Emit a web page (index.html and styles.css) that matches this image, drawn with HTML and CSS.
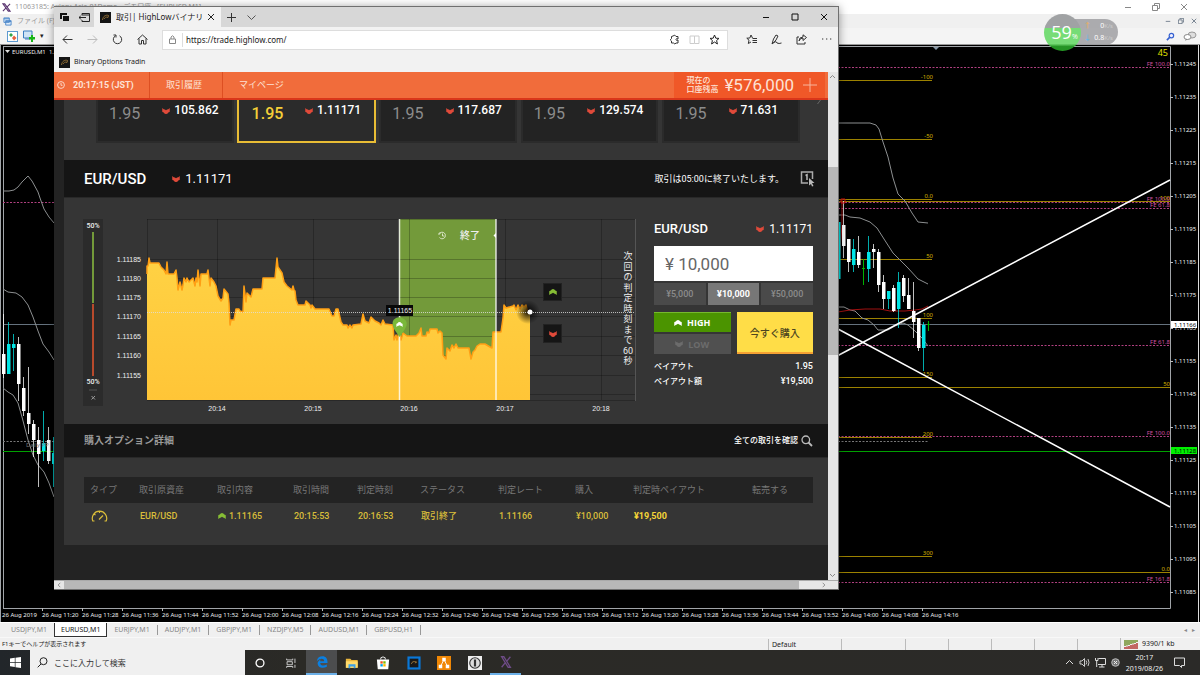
FILE: index.html
```html
<!DOCTYPE html>
<html lang="ja">
<head>
<meta charset="utf-8">
<title>Desktop</title>
<link rel="stylesheet" href="styles.css">
</head>
<body>
<svg class="defs" aria-hidden="true">
  <symbol id="down" viewBox="0 0 10 8"><path d="M0 0Q2 2 3.5 2L5 3 6.500 2Q8 2 10 0V5Q9 6 8 6 7 8 5 8 3 8 2 6 1 6 0 5Z"/></symbol>
  <symbol id="up" viewBox="0 0 10 8"><path d="M0 8Q2 6 3.500 6L5 5 6.500 6Q8 6 10 8V3Q9 2 8 2 7 0 5 0 3 0 2 2 1 2 0 3Z"/></symbol>
  <symbol id="fav" viewBox="0 0 11 11"><rect width="11" height="11" fill="#151515"/><path d="M2.500 8C3 4 6 2.500 8.500 3.500L8 5.500C6 4.500 5 5.500 4 7" fill="none" stroke="#8f6c34"/></symbol>
  <symbol id="restore" viewBox="0 0 8 8"><path d="M.5 2.500H5.500V7.500H.5ZM2.500 2V.5H7.500V5.500H6" fill="none" stroke="currentColor"/></symbol>
  <symbol id="close" viewBox="0 0 8 8"><path d="M1 1L7 7M7 1L1 7" fill="none" stroke="currentColor"/></symbol>
  <symbol id="min" viewBox="0 0 8 8"><path d="M1 4.500H7" fill="none" stroke="currentColor"/></symbol>
</svg>

<main class="terminal">
  <header class="title-row">
    <svg class="i9" viewBox="0 0 10 10"><path d="M1 1H3L9 9H7ZM9 1L6 4M4 6L1 9" fill="none" stroke="#5a3470" stroke-width="1.200"/></svg>
    <span>11063185: Axiory-Asia-01Demo - デモ口座 - [EURUSD,M1]</span>
    <span class="win-buttons"><button aria-label="最小化"><svg class="i8"><use href="#min"/></svg></button><button aria-label="元に戻す"><svg class="i8"><use href="#restore"/></svg></button><button aria-label="閉じる"><svg class="i8"><use href="#close"/></svg></button></span>
  </header>
  <div class="menu-row">
    <svg class="i9" viewBox="0 0 10 10"><path d="M1 1H7V6H1ZM3 4H9V9H3Z" fill="#dcebfa" stroke="#4a86c8"/><path d="M1 2H7M3 5H9" stroke="#4a86c8"/></svg>
    <span>ファイル (F)</span>
    <span class="mdi-buttons"><button aria-label="最小化"><svg class="i6"><use href="#min"/></svg></button><button aria-label="元に戻す"><svg class="i6"><use href="#restore"/></svg></button><button aria-label="閉じる"><svg class="i6"><use href="#close"/></svg></button></span>
  </div>
  <div class="tool-row">
    <button class="tool" aria-label="気配値"><svg class="i11" viewBox="0 0 11 11"><rect x=".5" y=".5" width="10" height="10" fill="#fff" stroke="#5d9ad0"/><path d="M2 4L4 2 6 4 4 6Z" fill="#35a64a"/><path d="M5 7L7 4.500 9.500 7 7 9.500Z" fill="#e8603c"/></svg></button>
    <button class="tool" aria-label="新規チャート"><svg class="i12" viewBox="0 0 12 12"><path d="M.5 1H9V8H.5ZM2 9H7" fill="#cfe3f5" stroke="#3b7cc0"/><path d="M6 7H8V5H10V7H12V9.500H10V12H8V9.500H6Z" fill="#18b518"/></svg></button>
    <span class="caret">▾</span>
    <span class="tool-right">
      <svg class="i9" viewBox="0 0 10 10"><circle cx="6" cy="4" r="2.500" fill="#eef" stroke="#3561d0" stroke-width="1.300"/><path d="M4 6L1 9" stroke="#3561d0" stroke-width="1.800"/></svg>
      <svg class="i14" viewBox="0 0 14 10"><ellipse cx="9" cy="4" rx="4" ry="3" fill="#ddd" stroke="#999"/><ellipse cx="4.500" cy="6" rx="3.500" ry="2.500" fill="#fff" stroke="#888"/><path d="M3 8L2 10 5 8" fill="#888"/></svg>
    </span>
  </div>
  <svg class="market" viewBox="0 45 1200 577" preserveAspectRatio="xMinYMin meet" id="market"></svg>
  <nav class="chart-tabs">
    <button>USDJPY,M1</button><button class="active">EURUSD,M1</button><button>EURJPY,M1</button><button>AUDJPY,M1</button><button>GBPJPY,M1</button><button>NZDJPY,M5</button><button>AUDUSD,M1</button><button>GBPUSD,H1</button>
    <span class="tab-arrows">◂ &nbsp; ▸</span>
  </nav>
  <footer class="status">
    <span class="help">F1キーでヘルプが表示されます</span><span class="cell profile">Default</span><span class="cell wide"></span><span class="cell"></span><span class="cell"></span><span class="cell"></span><span class="cell"></span><span class="cell"></span>
    <span class="traffic"><svg class="bars" viewBox="0 0 15 9"><path d="M1 0V6M3 0V5.500M5 0V5M7 0V4M9 0V3.500M11 0V3M13 0V2" stroke="#6f8f2c" stroke-width="1.500"/><path d="M1 9V7M3 9V6.500M5 9V6M7 9V5M9 9V4.500M11 9V4M13 9V3" stroke="#b33a34" stroke-width="1.500"/></svg>9390/1 kb</span>
  </footer>
</main>

<div class="meter"><div class="rates"><span><i class="o">↑</i>0<small>K/s</small></span><span><i class="b">↓</i>0.8<small>K/s</small></span></div><div class="dial">59<small>%</small></div></div>

<section class="browser">
  <div class="strip">
    <button class="strip-btn" aria-label="タブ一覧"><svg class="i11" viewBox="0 0 11 11"><path d="M1 1H8V3H3V7H1ZM4 4H10V9H4Z" fill="#111"/></svg></button>
    <button class="strip-btn" aria-label="タブを保存"><svg class="i11" viewBox="0 0 11 11"><path d="M3 3V1.500H10.500V9.500H3V8M3 3H10M0 5.500H7M2 3.500L0 5.500 2 7.500" fill="none" stroke="#222"/></svg></button>
    <div class="tab"><svg class="i11"><use href="#fav"/></svg><span class="tab-title">取引| HighLowバイナリーオプション</span><button aria-label="タブを閉じる"><svg class="i8"><use href="#close"/></svg></button></div>
    <button class="strip-btn" aria-label="新しいタブ"><svg class="i9" viewBox="0 0 9 9"><path d="M4.500 0V9M0 4.500H9" stroke="#333"/></svg></button>
    <button class="strip-btn" aria-label="タブ プレビュー"><svg class="i9" viewBox="0 0 9 9"><path d="M.5 2.500L4.500 6.500 8.500 2.500" fill="none" stroke="#555"/></svg></button>
    <span class="edge-buttons"><button aria-label="最小化"><svg class="i8"><use href="#min"/></svg></button><button aria-label="最大化"><svg class="i8" viewBox="0 0 8 8"><path d="M1 1H7V7H1Z" fill="none" stroke="#111"/></svg></button><button aria-label="閉じる"><svg class="i8"><use href="#close"/></svg></button></span>
  </div>
  <div class="address">
    <button aria-label="戻る"><svg class="i11" viewBox="0 0 11 11"><path d="M1 5.500H10.500M5 1.500L1 5.500 5 9.500" fill="none" stroke="#333"/></svg></button>
    <button aria-label="進む"><svg class="i11" viewBox="0 0 11 11"><path d="M.5 5.500H10M6 1.500L10 5.500 6 9.500" fill="none" stroke="#bbb"/></svg></button>
    <button aria-label="更新"><svg class="i11" viewBox="0 0 11 11"><path d="M7.500 1.800A4.200 4.200 0 1 1 3.500 1.800M1.500 1H4V3.500" fill="none" stroke="#333"/></svg></button>
    <button aria-label="ホーム"><svg class="i11" viewBox="0 0 11 11"><path d="M.5 5.500L5.500 1 10.500 5.500M2 4.500V10H4.500V6.500H6.500V10H9V4.500" fill="none" stroke="#333"/></svg></button>
    <label class="urlbox">
      <svg class="i9" viewBox="0 0 9 9"><path d="M1.500 4H7.500V8.500H1.500ZM3 4V2Q4.500 -.5 6 2V4" fill="none" stroke="#888"/></svg>
      <input type="text" aria-label="アドレス" value="https://trade.highlow.com/">
      <svg class="i11" viewBox="0 0 11 11"><path d="M4 2Q6 0 7 2.500H9V5Q7 4 7 5.500 7 7 9 6V9H7Q6 11 4.500 9H2.500V7Q0 6 2.500 4.500V2.500Z" fill="none" stroke="#333"/></svg>
      <svg class="i11" viewBox="0 0 11 11"><path d="M1 2H5.500V9.500H1ZM5.500 2H10V9.500H5.500" fill="none" stroke="#ccc"/></svg>
      <svg class="i11" viewBox="0 0 11 11"><path d="M5.500 1L6.800 4.200 10 4.400 7.600 6.500 8.400 10 5.500 8 2.600 10 3.400 6.500 1 4.400 4.200 4.200Z" fill="none" stroke="#222"/></svg>
    </label>
    <button aria-label="お気に入り"><svg class="i11" viewBox="0 0 11 11"><path d="M6.500 4L5 1 3.800 4 .8 4.200 3 6.200 2.300 9.500 5 8M6.500 4.500H11M6.500 6.500H11M6.500 8.500H11" fill="none" stroke="#333"/></svg></button>
    <button aria-label="ノート"><svg class="i11" viewBox="0 0 11 11"><path d="M1 10L2.500 5 5 1 7 2 5 6 2 9.500M1 10Q5 6 6 9 8 10 10.500 9" fill="none" stroke="#333"/></svg></button>
    <button aria-label="共有"><svg class="i11" viewBox="0 0 11 11"><path d="M3 3H1V10H9V8M3 7Q4 4 7 4V6.500L10.500 3.500 7 .8V3Q3 3 3 7Z" fill="none" stroke="#333"/></svg></button>
    <button aria-label="設定"><svg class="i11" viewBox="0 0 11 11"><path d="M1 5H2.300M5 5H6.300M9 5H10.300" stroke="#333"/></svg></button>
  </div>
  <div class="bookmarks"><a href="#"><svg class="i11"><use href="#fav"/></svg><span>Binary Options Tradin</span></a></div>

  <div class="viewport">
    <div class="page">
      <header class="site-bar">
        <span class="clock"><svg class="i8" viewBox="0 0 8 8"><circle cx="4" cy="4" r="3.400" fill="none" stroke="#fbd5c6"/><path d="M4 2V4.300H5.500" fill="none" stroke="#fbd5c6"/></svg><b>20:17:15 (JST)</b></span>
        <a class="l1" href="#">取引履歴</a><a class="l2" href="#">マイページ</a>
        <div class="balance"><span>現在の<br>口座残高</span><strong>¥576,000</strong><svg class="i14" viewBox="0 0 14 14"><path d="M7 0V14M0 7H14" stroke="#f9b59b"/></svg></div>
      </header>
      <div class="cards">
        <article><p>17:21</p><div><span>1.95</span><b><svg class="arr"><use href="#down"/></svg>105.862</b></div></article>
        <article class="on"><p>17:21</p><div><span>1.95</span><b><svg class="arr"><use href="#down"/></svg>1.11171</b></div></article>
        <article><p>17:21</p><div><span>1.95</span><b><svg class="arr"><use href="#down"/></svg>117.687</b></div></article>
        <article><p>17:21</p><div><span>1.95</span><b><svg class="arr"><use href="#down"/></svg>129.574</b></div></article>
        <article class="last"><p>17:21</p><div><span>1.95</span><b><svg class="arr"><use href="#down"/></svg>71.631</b></div></article>
        <svg class="more" viewBox="0 0 6 6"><path d="M4.500 0L1.500 4" stroke="#666"/></svg>
      </div>
      <div class="pair-bar"><h1>EUR/USD</h1><span class="rate"><svg class="arr"><use href="#down"/></svg>1.11171</span><span class="ends">取引は05:00に終了いたします。</span>
        <button aria-label="ワンクリック"><svg class="one" viewBox="0 0 15 17"><path d="M8 13H1.500V2H12.500V9" fill="none" stroke="#aaa" stroke-width="1.500"/><path d="M5.500 5.500L7 4.800V10" fill="none" stroke="#bbb" stroke-width="1.500"/><path d="M9 8L14.500 13H12L13.500 16 12 16.500 11 14 9 15.500Z" fill="#bbb"/></svg></button></div>
      <div class="trade">
        <svg class="plot" viewBox="64 198 580 226" id="plot">
          <defs><linearGradient id="gold" x1="0" y1="0" x2="0" y2="1"><stop offset="0" stop-color="#ffd244"/><stop offset="1" stop-color="#ffc537"/></linearGradient>
          <radialGradient id="shade"><stop offset="0" stop-color="#000" stop-opacity=".9"/><stop offset="1" stop-color="#000" stop-opacity="0"/></radialGradient></defs>
          <rect x="83" y="219" width="20" height="187" fill="#2b2b2b"/>
          <path d="M93 232V303" stroke="#739a3a" stroke-width="2"/><path d="M93 304V376" stroke="#b84a2c" stroke-width="2"/><path d="M89 390H97" stroke="#555"/>
          <g class="pct"><text x="93" y="228">50%</text><text x="93" y="384">50%</text></g><path d="M91.500 396L95 399.500M95 396L91.500 399.500" stroke="#999"/>
          <rect x="399" y="219" width="97" height="181" fill="#739a3a"/>
          <path d="M147 219.500H635M147 259.500H635M147 278.500H635M147 297.500H635M147 316.500H635M147 336.500H635M147 355.500H635M147 375.500H635M147 394.500H635M147 400.500H635M147.500 219V400M217.500 219V400M313.500 219V400M409.500 219V400M505.500 219V400M601.500 219V400" stroke="#000" stroke-opacity=".24" fill="none"/>
          <path d="M635.500 219V401" stroke="#555"/>
          <path fill="url(#gold)" d="M147 400V274L147 266L148 266L149 258 150 263 159 263 161 267 164 270 166 274 167 262 168 274 174 274 176 270 177 278 178 290 180 282 182 290 183 285 184 278 186 282 187 278 189 282 193 278 195 286 196 278 197 282 198 270 200 286 201 274 207 274 208 270 210 286 211 278 214 282 216 286 218 296 221 301 223 298 224 289 228 294 229 303 230 325 231 320 234 320 236 309 239 309 240 311 243 312 244 286 246 302 247 293 251 297 253 289 262 289 263 278 275 278 277 258 278 267 282 273 284 282 287 286 292 290 293 286 294 290 295 291 296 300 298 305 305 305 306 301 310 305 311 308 312 305 315 309 329 309 332 316 334 316 336 309 338 309 341 322 343 325 347 325 348 328 350 325 352 328 353 325 361 324 363 314 365 321 369 323 371 317 375 321 379 323 381 325 383 320 385 324 393 325 394 340 396 335 397 340 399 332 401 340 403 333 407 336 416 336 419 333 421 328 422 336 426 336 427 332 429 333 430 329 437 329 438 333 440 331 442 333 443 355 446 359 447 348 450 351 452 345 454 348 456 344 458 348 469 348 471 359 473 352 475 350 477 346 480 344 485 344 490 347 492 348 493 332 501 332 503 318 504 305 506 308 513 306 514 305 516 310 518 305 520 309 522 305 524 307 526 305 527 310 530 312 530 400Z"/>
          <path fill="none" stroke="#ff9f14" stroke-width="1.500" stroke-linejoin="round" d="M147 274L147 266L148 266L149 258 150 263 159 263 161 267 164 270 166 274 167 262 168 274 174 274 176 270 177 278 178 290 180 282 182 290 183 285 184 278 186 282 187 278 189 282 193 278 195 286 196 278 197 282 198 270 200 286 201 274 207 274 208 270 210 286 211 278 214 282 216 286 218 296 221 301 223 298 224 289 228 294 229 303 230 325 231 320 234 320 236 309 239 309 240 311 243 312 244 286 246 302 247 293 251 297 253 289 262 289 263 278 275 278 277 258 278 267 282 273 284 282 287 286 292 290 293 286 294 290 295 291 296 300 298 305 305 305 306 301 310 305 311 308 312 305 315 309 329 309 332 316 334 316 336 309 338 309 341 322 343 325 347 325 348 328 350 325 352 328 353 325 361 324 363 314 365 321 369 323 371 317 375 321 379 323 381 325 383 320 385 324 393 325 394 340 396 335 397 340 399 332 401 340 403 333 407 336 416 336 419 333 421 328 422 336 426 336 427 332 429 333 430 329 437 329 438 333 440 331 442 333 443 355 446 359 447 348 450 351 452 345 454 348 456 344 458 348 469 348 471 359 473 352 475 350 477 346 480 344 485 344 490 347 492 348 493 332 501 332 503 318 504 305 506 308 513 306 514 305 516 310 518 305 520 309 522 305 524 307 526 305 527 310 530 312"/>
          <path d="M399.500 219V400M496 219V400" stroke="#fff" stroke-opacity=".8" stroke-width="1.500"/>
          <circle cx="528" cy="312" r="12" fill="url(#shade)"/>
          <path d="M147 312.500H635" stroke="#ddd" stroke-opacity=".8" stroke-dasharray="1 1"/><circle cx="530" cy="312" r="2.500" fill="#fff"/>
          <rect x="386" y="305" width="27" height="11" fill="#080808"/>
          <path d="M399.500 337L394 329Q390 321 396 318 400 316 404 319 409 322 405 329Z" fill="#7ab83a"/><use href="#up" x="396" y="322" width="7" height="5" fill="#fff"/>
          <path d="M496 233L493.500 235.500 496 238Z" fill="#fff"/>
          <path d="M439.500 233.500A3.300 3.300 0 1 1 439.500 237.500M438 234H440V232M442.500 233.500V236H444.500" fill="none" stroke="#d8e4c4"/>
          <text class="ended" x="460" y="239">終了</text><text class="mark" x="400" y="313">1.11165</text>
          <g stroke="#222"><rect x="543.500" y="283.500" width="18" height="17" fill="#151515"/><rect x="543.500" y="324.500" width="18" height="18" fill="#151515"/></g>
          <use href="#up" x="549" y="289" width="8" height="6" fill="#86bd35"/><use href="#down" x="549" y="331" width="8" height="6" fill="#e04a3a"/>
          <g class="ylab"><text x="141" y="262">1.11185</text><text x="141" y="281">1.11180</text><text x="141" y="300">1.11175</text><text x="141" y="319">1.11170</text><text x="141" y="339">1.11165</text><text x="141" y="358">1.11160</text><text x="141" y="378">1.11155</text></g>
          <g class="xlab"><text x="217" y="411">20:14</text><text x="313" y="411">20:15</text><text x="409" y="411">20:16</text><text x="505" y="411">20:17</text><text x="601" y="411">20:18</text></g>
          <g class="vert"><text x="628" y="259">次</text><text x="628" y="270">回</text><text x="628" y="280">の</text><text x="628" y="291">判</text><text x="628" y="301">定</text><text x="628" y="312">時</text><text x="628" y="322">刻</text><text x="628" y="333">ま</text><text x="628" y="343">で</text><text x="628" y="354">60</text><text x="628" y="364">秒</text></g>
        </svg>
        <form class="order">
          <div class="order-head"><h2>EUR/USD</h2><span class="rate"><svg class="arr"><use href="#down"/></svg>1.11171</span></div>
          <input class="amount" aria-label="金額" value="¥ 10,000">
          <div class="amounts"><button type="button">¥5,000</button><button type="button" class="sel">¥10,000</button><button type="button">¥50,000</button></div>
          <div class="actions"><button type="button" class="high"><svg class="arr"><use href="#up"/></svg>HIGH</button><button type="button" class="buy">今すぐ購入</button><button type="button" class="low"><svg class="arr"><use href="#down"/></svg>LOW</button></div>
          <dl><dt>ペイアウト</dt><dd>1.95</dd><dt>ペイアウト額</dt><dd>¥19,500</dd></dl>
        </form>
      </div>
      <div class="detail-bar"><h2>購入オプション詳細</h2><a href="#">全ての取引を確認<svg class="lens" viewBox="0 0 12 12"><circle cx="4.800" cy="4.800" r="3.800" fill="none" stroke="#bbb" stroke-width="1.300"/><path d="M7.500 7.500L11 11" stroke="#bbb" stroke-width="1.800"/></svg></a></div>
      <div class="history">
        <table>
          <colgroup><col class="c1"><col class="c2"><col class="c3"><col class="c4"><col class="c5"><col class="c6"><col class="c7"><col class="c8"><col class="c9"><col class="c10"></colgroup>
          <thead><tr><th>タイプ</th><th>取引原資産</th><th>取引内容</th><th>取引時間</th><th>判定時刻</th><th>ステータス</th><th>判定レート</th><th>購入</th><th>判定時ペイアウト</th><th>転売する</th></tr></thead>
          <tbody><tr><td><svg class="gauge" viewBox="0 0 17 12"><path d="M3.500 11H1.800A7.200 7.200 0 1 1 15.200 11H13.500M8.500 1V3M3 4L4.500 5M8 9.500L12 5.500" fill="none" stroke="#d9bd3a" stroke-width="1.200"/></svg></td><td>EUR/USD</td><td><svg class="arr up"><use href="#up"/></svg>1.11165</td><td>20:15:53</td><td>20:16:53</td><td>取引終了</td><td>1.11166</td><td>¥10,000</td><td><strong>¥19,500</strong></td><td></td></tr></tbody>
        </table>
      </div>
    </div>
    <div class="vscroll"><svg viewBox="0 0 9 9"><path d="M2 6L4.500 3.500 7 6" fill="none" stroke="#888"/></svg><span class="thumb"></span><svg viewBox="0 0 9 9"><path d="M2 3L4.500 5.500 7 3" fill="none" stroke="#888"/></svg></div>
  </div>
  <div class="hscroll"><svg viewBox="0 0 9 9"><path d="M6 2L3.500 4.500 6 7" fill="none" stroke="#888"/></svg><span class="thumb"></span><svg class="last-arrow" viewBox="0 0 9 9"><path d="M3 2L5.500 4.500 3 7" fill="none" stroke="#888"/></svg></div>
</section>

<footer class="taskbar">
  <button class="start" aria-label="スタート"><svg class="i11" viewBox="0 0 11 11"><path d="M0 1.500L4.800 .8V5H0ZM5.500 .7L11 0V5H5.500ZM0 5.800H4.800V10L0 9.300ZM5.500 5.800H11V11L5.500 10.200Z" fill="#fff"/></svg></button>
  <label class="search"><svg class="i11" viewBox="0 0 11 11"><circle cx="6.500" cy="4.200" r="3.500" fill="none" stroke="#222"/><path d="M4 7L.7 10.300" stroke="#222"/></svg><input type="text" aria-label="検索" placeholder="ここに入力して検索"></label>
  <div class="apps">
    <button aria-label="Cortana"><svg viewBox="0 0 16 16"><circle cx="8" cy="8" r="4.500" fill="none" stroke="#fff" stroke-width="1.500"/></svg></button>
    <button aria-label="タスク ビュー"><svg viewBox="0 0 16 16"><path d="M3 3V4.500H10V3M3.500 6.500H9.500V10H3.500ZM3 13.500V12H10V13.500M12.500 3V8M12.500 10V13.500" fill="none" stroke="#ddd"/></svg></button>
    <button class="current" aria-label="Edge"><svg viewBox="0 0 16 16"><path d="M2 7C3 3 5 1.500 8.500 1.500 12.500 1.500 14.500 4.500 14.300 9H6C6 12.500 10.500 12.500 13.500 10.800V13.500C9 16 3 14.500 3 9.500 3 7.500 4.500 6 6.500 5 5.900 5.800 5.900 6.500 5.800 7H10.500C10.500 3 5 3.500 2 7Z" fill="#0b7fe0"/></svg></button>
    <button aria-label="エクスプローラー"><svg viewBox="0 0 16 16"><path d="M1 3H6L7.500 4.500H14.500V13.500H1Z" fill="#e9b63c"/><path d="M1 6H14.500V13.500H1Z" fill="#ffda6b"/><path d="M4 14V9.500H12V14H10V12H6V14Z" fill="#3c9fe5"/></svg></button>
    <button aria-label="ストア"><svg viewBox="0 0 16 16"><path d="M5.500 4V2Q8 0 10.500 2V4" fill="none" stroke="#fff"/><path d="M1 4H15L14 15H2Z" fill="#fff"/><path d="M5 6H7.700V8.700H5Z" fill="#f05022"/><path d="M8.300 6H11V8.700H8.300Z" fill="#7eb900"/><path d="M5 9.300H7.700V12H5Z" fill="#00a3ee"/><path d="M8.300 9.300H11V12H8.300Z" fill="#ffb800"/></svg></button>
    <button aria-label="HighLow"><svg viewBox="0 0 16 16"><rect x=".5" y=".5" width="15" height="15" fill="#0a78d8"/><rect x="3" y="3" width="10" height="10" fill="#191919"/><path d="M5 9Q6 5 11 7L9 8" fill="none" stroke="#a9803c"/></svg></button>
    <button aria-label="draw.io"><svg viewBox="0 0 16 16"><rect width="16" height="16" fill="#f08705"/><path d="M8 4L4 12M8 4L12 12" stroke="#fff"/><path d="M6 2H10V6H6ZM2 10H6V14H2ZM10 10H14V14H10Z" fill="#fff"/></svg></button>
    <button aria-label="1Password"><svg viewBox="0 0 16 16"><rect width="16" height="16" fill="#eee"/><circle cx="8" cy="8" r="6" fill="#ddd" stroke="#333" stroke-width="1.300"/><path d="M8 4V12" stroke="#333" stroke-width="2.500"/></svg></button>
    <button class="running" aria-label="MetaTrader"><svg viewBox="0 0 16 16"><path d="M3 2H5.500L13 14H10.500ZM13 2L9 7M7 9L3 14" fill="none" stroke="#6f4c88" stroke-width="1.500"/></svg></button>
  </div>
  <div class="tray">
    <svg class="i9" viewBox="0 0 9 9"><path d="M1 6L4.500 2.500 8 6" fill="none" stroke="#ddd"/></svg>
    <svg class="i11" viewBox="0 0 11 11"><path d="M1 4H3L5.500 1.500V9.500L3 7H1ZM7 3.500Q8.500 5.500 7 7.500M9 2Q11 5.500 9 9" fill="none" stroke="#ccc"/></svg>
    <svg class="i11" viewBox="0 0 11 11"><path d="M3.500 1.500H10.500V7.500H3M7 8V10M4 10H9.500M.5 1V3.500H3V1M1.700 3.500V10" fill="none" stroke="#ddd"/></svg>
    <svg class="i9" viewBox="0 0 9 9"><circle cx="4.500" cy="4.500" r="3.800" fill="#777" stroke="#bbb"/><path d="M3 3L6 6M6 3L3 6" stroke="#eee"/></svg>
    <time>20:17<br>2019/08/26</time>
    <svg class="i11" viewBox="0 0 11 11"><path d="M.5 1H10.500V8.500H7.500V10.500L5.500 8.500H.5Z" fill="none" stroke="#ddd"/></svg>
  </div>
</footer>
<script src="market.js"></script>
</body>
</html>
```

FILE: market.js
```js
const parts = [];
const path = (d, stroke, extra = '') => parts.push(`<path d="${d}" fill="none" stroke="${stroke}" ${extra}/>`);
const text = (x, y, s, cls) => parts.push(`<text x="${x}" y="${y}" class="${cls}">${s}</text>`);

parts.push('<rect x="0" y="45" width="1200" height="577" fill="#000"/>');
path('M.5 45V622M3.500 46V608M3 46.500H1170.500V608.500H3', '#a0a4a8');
path('M1198.500 45V622', '#ddd');

const gold = '#9c8200';
[[80, '-100'], [139, '-50'], [199, '0.0'], [259, '50'], [318, '100'], [377, '150'], [437, '200'], [556, '300']].forEach(([y, s]) => {
  path(`M838 ${y}.5H932`, gold);
  text(933, y - 1, s, 'm gold end');
});
[[201, '100'], [387, '50'], [572, '0.0']].forEach(([y, s]) => {
  path(`M838 ${y}.5H1170`, gold);
  text(1170, y - 1, s, 'm gold end');
});
[[67, 'FE 100.0'], [202, 'FE 100.0'], [208, 'FE 61.8'], [345, 'FE 61.8'], [436, 'FE 100.0'], [582, 'FE 161.8']].forEach(([y, s]) => {
  path(`M838 ${y}.5H1170`, '#b04080', 'stroke-dasharray="2 1.500"');
  text(1170, y - 1, s, 'm pink end');
});
path('M3 202.500H54', '#b04080', 'stroke-dasharray="2 1.500"');
path('M838 441.500H928M3 441.500H54', '#777', 'stroke-dasharray="2 1.500"');
path('M838 324.500H1170M3 324.500H54', '#65727e');
path('M838 451.500H1170M3 451.500H54', '#00a000');

const curve = '#8c8f90';
path('M3 191L9 191 14 190 18 187 22 182 28 176 32 181 38 192 40 198 44 209 49 217 54 223', curve);
path('M3 289L8 292 16 293 22 297 28 305 33 317 38 331 43 344 49 352 54 360', curve);
path('M3 388L8 392 13 395 18 403 22 417 28 440 33 455 38 465 44 472 49 483 54 497', curve);
path('M838 123L850 123 870 123 876 125 879 129 883 142 888 157 893 178 898 194 905 201 912 213 918 222 928 223', curve);
path('M838 215L845 215 850 217 860 218 870 222 877 228 884 239 893 253 900 260 908 268 918 279 928 284', curve);
path('M838 307L844 307 850 310 855 311 862 318 868 320 874 325 878 330 888 330 895 326 903 323 908 325 915 331 922 338 928 346', curve);
path('M838 312L850 310 865 309 880 309 890 311 905 311 915 310 922 309 928 306M842 199V225L839 262', '#a01010');

// x, wick top, wick bottom, body top, body bottom, colour
const W = '#fff', C = '#00e5e5', G = '#00b000';
[
  [3, 314, 378, 354, 374, W], [8, 322, 374, 344, 374, C], [13, 334, 371, 344, 348, C], [18, 337, 401, 344, 384, W],
  [23, 377, 416, 388, 411, W], [28, 367, 434, 413, 424, W], [33, 420, 457, 424, 440, W], [38, 427, 487, 440, 454, W],
  [43, 411, 461, 443, 451, C], [48, 427, 464, 440, 461, W], [53, 437, 487, 453, 464, C],
  [838, 222, 282, 222, 279, C], [843, 201, 258, 225, 246, W], [848, 239, 272, 239, 262, W], [853, 239, 272, 249, 265, C],
  [858, 236, 268, 252, 265, W], [868, 236, 282, 252, 269, C], [873, 244, 268, 249, 252, W], [878, 249, 292, 252, 285, W],
  [883, 275, 309, 282, 299, W], [888, 291, 309, 291, 299, C], [893, 285, 312, 288, 311, W], [898, 272, 328, 282, 309, C],
  [903, 275, 302, 278, 296, W], [908, 278, 309, 295, 309, W], [913, 282, 338, 311, 322, W], [918, 318, 351, 318, 348, W],
  [923, 322, 371, 325, 348, C]
].forEach(([x, a, b, t, u, c]) => {
  path(`M${x}.5 ${a}V${b}`, c, 'stroke-opacity=".75"');
  parts.push(`<rect x="${x - 1}" y="${t}" width="3.500" height="${u - t}" fill="${c}"/>`);
});
path('M863.500 259V285M862 268.500H865M928.500 321V331M927 324.500H930', G);
path('M841 199H845V203H841Z', '#d01010');
path('M838 355.500L1170 180M838 329L1170 507', '#fff', 'stroke-width="1.500"');

for (let i = 0; i < 17; i++) {
  const y = 64 + i * 33;
  path(`M1170 ${y}.5H1173`, '#bbb');
  text(1174, y + 2, (1.11245 - i * 0.0001).toFixed(5), 'm');
}
parts.push('<rect x="1171" y="321" width="26" height="7" fill="#fff"/><rect x="1171" y="447" width="26" height="7" fill="#00f000"/>');
text(1174, 327, '1.11166', 'm dark');
text(1174, 453, '1.11128', 'm dark');

text(2, 617, '26 Aug 2019', 'm');
for (let i = 0; i < 23; i++) {
  const min = 11 * 60 + 20 + i * 8, x = 42 + i * 40;
  path(`M${x}.5 608V611`, '#bbb');
  text(x, 617, `26 Aug ${Math.floor(min / 60)}:${String(min % 60).padStart(2, '0')}`, 'm');
}
text(26, 447, 'Daily PP', 'm grey');
parts.push('<path d="M5 50H10L7.500 53Z" fill="#ddd"/><path d="M933 47H939L936 50Z" fill="#8898a8"/>');
text(12, 54, 'EURUSD,M1  1.11164', 'm title');
text(1168, 56, '45', 'm count end');
document.getElementById('market').innerHTML = parts.join('');
```

FILE: styles.css
```css
* { box-sizing: border-box; }
html, body { height: 100%; margin: 0; }
body { display: flex; flex-direction: column; overflow: hidden; background: #000; font: 8px/12px "Noto Sans", "Noto Sans CJK JP", sans-serif; color: #222; position: relative; }
button { border: 0; padding: 0; margin: 0; background: none; color: inherit; font: inherit; display: inline-flex; align-items: center; justify-content: center; }
input { border: 0; padding: 0; background: none; font: inherit; color: inherit; min-width: 0; }
a { color: inherit; text-decoration: none; }
h1, h2, p, dl, dd { margin: 0; font-weight: 500; }
svg { display: block; flex: none; }
.defs { position: absolute; width: 0; height: 0; }
.i6 { width: 6px; height: 6px; }
.i8 { width: 8px; height: 8px; }
.i9 { width: 9px; height: 9px; }
.i11 { width: 11px; height: 11px; }
.i12 { width: 12px; height: 12px; }
.i14 { width: 14px; height: 14px; }
.arr { width: 8px; height: 6px; fill: #e04a3a; }

/* trading terminal */
.terminal { flex: 1; min-height: 0; display: flex; flex-direction: column; background: #f0f0f0; }
.title-row { height: 14px; background: #fff; display: flex; align-items: center; gap: 4px; padding: 0 12px 0 2px; color: #999; font-size: 7px; }
.win-buttons { margin-left: auto; display: flex; gap: 20px; color: #888; }
.menu-row { height: 14px; display: flex; align-items: center; gap: 5px; padding: 0 3px; color: #999; font-size: 7px; }
.mdi-buttons { margin-left: auto; display: flex; gap: 7px; color: #567; }
.tool-row { height: 17px; background: #f4f4f4; border-bottom: 1px solid #999; display: flex; align-items: center; gap: 5px; padding: 0 3px 0 7px; }
.caret { font-size: 7px; }
.tool-right { margin-left: auto; display: flex; align-items: center; gap: 8px; }
.market { flex: 1; min-height: 0; width: 100%; background: #000; }
.m { font: 6px "Noto Sans", sans-serif; fill: #eee; white-space: pre; }
.end { text-anchor: end; }
.gold { fill: #d0b000; }
.pink { fill: #d050a0; }
.dark { fill: #000; }
.grey { fill: #777; }
.count { font-size: 9px; fill: #e0e000; }
.chart-tabs { height: 15px; border-top: 1px solid #fff; display: flex; align-items: center; padding-left: 4px; font-size: 7px; color: #888; }
.chart-tabs button { padding: 0 7px; line-height: 10px; border-right: 1px solid #999; }
.chart-tabs button:first-child { border-right: 0; }
.chart-tabs .active { align-self: stretch; padding: 0 6px; background: #fff; color: #222; border: 1px solid #333; border-top: 0; }
.tab-arrows { margin-left: auto; padding-right: 5px; font-size: 6px; }
.status { height: 13px; display: flex; align-items: center; font-size: 7px; border-top: 1px solid #f8f8f8; }
.help { flex: 1; font-size: 6px; padding-left: 2px; }
.cell { width: 43px; height: 11px; border-left: 1px solid #bbb; padding-left: 3px; }
.profile { width: 73px; }
.wide { width: 64px; }
.traffic { width: 80px; border-left: 1px solid #bbb; padding-left: 3px; display: flex; align-items: center; gap: 3px; }
.bars { width: 15px; height: 9px; }

/* network meter */
.meter { position: absolute; right: 82px; top: 14px; width: 74px; height: 36px; color: #fff; }
.rates { position: absolute; inset: 5px 0 5px 18px; border-radius: 13px; background: #9a9a9ecc; padding: 1px 5px 0 22px; font-size: 7px; line-height: 12px; }
.rates span { display: flex; justify-content: flex-end; }
.rates i { margin-right: auto; font-style: normal; }
.rates small { font-size: 6px; color: #ccc; }
.o { color: #ffb040; }
.b { color: #50b8f0; }
.dial { position: absolute; width: 37px; height: 37px; border-radius: 50%; background: linear-gradient(#a0a2a4 39%, #76dc76 39%, #76dc76 80%, #249424 88%); font: 18px/37px "Open Sans", sans-serif; text-align: center; padding-left: 4px; }
.dial small { font-size: 7px; }

/* browser window */
.browser { position: absolute; left: 54px; right: 361px; top: 6px; bottom: 85px; display: flex; flex-direction: column; background: #f2f2f2; border: 1px solid #707070; border-width: 1px 1px 1px 0; box-shadow: 0 1px 9px #0006; }
.strip { height: 20px; flex: none; background: #d7d7d7; display: flex; align-items: center; }
.strip-btn { width: 20px; height: 20px; }
.tab { width: 127px; height: 20px; background: #f2f2f2; display: flex; align-items: center; padding: 0 6px; gap: 5px; }
.tab-title { flex: 1; overflow: hidden; white-space: nowrap; }
.edge-buttons { margin-left: auto; display: flex; gap: 21px; padding-right: 10px; color: #111; }
.address { height: 25px; flex: none; display: flex; align-items: center; gap: 14px; padding: 0 6px 0 8px; }
.urlbox { flex: 1; height: 20px; background: #fff; border: 1px solid #ddd; display: flex; align-items: center; gap: 9px; padding: 0 7px 0 5px; margin-right: 4px; }
.urlbox input { flex: 1; border-left: 1px solid #ddd; padding-left: 3px; margin-left: -4px; height: 14px; }
.bookmarks { height: 20px; flex: none; padding: 4px 5px; font-size: 7px; }
.bookmarks a { display: flex; align-items: center; gap: 4px; }
.viewport { flex: 1; min-height: 0; display: flex; }
.page { flex: 1; min-width: 0; overflow: hidden; background: #232323; color: #fff; padding-left: 10px; font-family: Roboto, "Noto Sans CJK JP", sans-serif; }
.vscroll { width: 10px; background: #e6e6e6; display: flex; flex-direction: column; }
.vscroll svg { width: 9px; height: 9px; }
.vscroll .thumb { height: 37%; margin: 86px 0 auto; background: #b8b8b8; }
.hscroll { height: 9px; flex: none; background: #e6e6e6; display: flex; border-top: 1px solid #aaa; }
.hscroll svg { width: 10px; height: 8px; }
.hscroll .thumb { flex: 1; background: #b8b8b8; margin-right: 20px; }
.hscroll .last-arrow { margin-right: 9px; }

/* trading site */
.site-bar { height: 28px; margin-left: -10px; background: #f16c3b; border-bottom: 2px solid #d9361a; display: flex; align-items: stretch; font-size: 9px; color: #fde2d6; }
.site-bar a, .clock { display: flex; align-items: center; }
.clock { width: 96px; padding-left: 3px; gap: 8px; border-right: 1px solid #dd4f22; }
.l1 { width: 73px; justify-content: center; padding-right: 4px; border-right: 1px solid #dd4f22; }
.l2 { padding-left: 16px; }
.balance { margin-left: auto; margin-right: 3px; background: #f05828; padding: 0 8px 0 12px; display: flex; align-items: center; gap: 6px; font-size: 8px; line-height: 9px; }
.balance span { font-weight: 500; }
.balance strong { font-size: 17px; font-weight: 400; }
.balance svg { margin-left: 3px; }
.cards { height: 60px; background: #353535; display: grid; grid-template-columns: repeat(5, 1fr) 22px; gap: 4px; padding: 0 2px 17px 32px; font-size: 12px; }
.cards article { background: #232323; overflow: hidden; padding: 0 13px 0 11px; border: 2px solid #2b2b2b; border-top: 0; }
.cards .on { border-color: #e9bd35; background: #2b2b2b; margin: 0 -1px; padding-left: 13px; }
.cards .last { padding-right: 20px; }
.cards p { font-size: 10px; line-height: 14px; margin: -10px 0 0 13px; color: #888; }
.cards div { display: flex; justify-content: space-between; align-items: flex-start; }
.cards div span { font-size: 16px; line-height: 20px; color: #8c8c8c; }
.cards .on div span { color: #f5cf38; font-weight: 500; }
.cards b { font-weight: 500; line-height: 13px; display: flex; align-items: center; gap: 4px; }
.more { width: 6px; height: 6px; margin-left: 12px; }
.pair-bar { height: 38px; background: #151515; border-bottom: 1px solid #282828; padding: 0 13px 0 20px; display: flex; align-items: center; }
.pair-bar h1 { font-size: 15px; }
.rate { display: flex; align-items: center; gap: 5px; font-size: 12px; }
.pair-bar .rate { font-size: 13px; margin-left: 26px; }
.ends { margin-left: auto; margin-right: 16px; font-size: 9px; }
.one { width: 15px; height: 17px; }
.trade { background: #353535; display: flex; align-items: flex-start; padding-right: 15px; }
.plot { flex: 1; min-width: 0; }
.plot text { fill: #eee; font: 7px "Liberation Sans", sans-serif; }
.plot .pct text { font: 500 7px Roboto, sans-serif; text-anchor: middle; }
.plot .ylab text { text-anchor: end; }
.plot .xlab text, .plot .mark { text-anchor: middle; }
.plot .vert text { font: 9px Roboto, "Noto Sans CJK JP", sans-serif; text-anchor: middle; }
.plot .ended { font: 500 10px "Noto Sans CJK JP", sans-serif; }
.order { width: 159px; margin-left: 10px; padding-top: 22px; display: flex; flex-direction: column; }
.order-head { display: flex; justify-content: space-between; line-height: 18px; margin-bottom: 8px; }
.order-head h2 { font-size: 13px; }
.amount { height: 35px; background: #fff; color: #666; font-size: 17px; padding-left: 11px; width: 100%; }
.amounts { display: grid; grid-template-columns: 1fr 1fr 1fr; gap: 2px; margin: 2px 0 7px; }
.amounts button { height: 22px; background: #4a4a4a; color: #8c8c8c; font-size: 9px; font-weight: 500; }
.amounts .sel { background: #777; color: #fff; font-weight: 700; }
.actions { display: grid; grid-template-columns: 1fr 1fr; gap: 2px 6px; }
.actions button { height: 20px; gap: 5px; font: 700 9px "Open Sans", sans-serif; }
.actions .arr { fill: currentColor; }
.high { background: #4b9400; border-top: 1px solid #76b82e; }
.actions .low { background: #505050; color: #6c6c6c; }
.actions .buy { grid-row: span 2; height: auto; background: #ffdd47; color: #4d4520; border-bottom: 2px solid #f5a133; font: 500 10px "Noto Sans CJK JP", sans-serif; }
.order dl { display: grid; grid-template-columns: auto auto; justify-content: space-between; line-height: 15px; margin-top: 5px; font-size: 8px; font-weight: 500; }
.order dd { text-align: right; font-size: 9px; }
.detail-bar { height: 34px; background: #151515; border-bottom: 1px solid #282828; display: flex; align-items: center; justify-content: space-between; padding: 0 15px 0 20px; }
.detail-bar h2 { font-size: 10px; font-weight: 700; color: #999; }
.detail-bar a { display: flex; align-items: center; gap: 3px; font-weight: 500; }
.lens { width: 12px; height: 12px; }
.history { background: #353535; padding: 19px 15px 17px 20px; }
table { width: 100%; table-layout: fixed; border-collapse: collapse; font-size: 9px; text-align: left; }
th { height: 26px; background: #232323; color: #777; font-weight: 400; padding: 0 0 0 6px; white-space: nowrap; }
td { height: 25px; padding: 0 0 0 7px; color: #d9bd3a; font-weight: 500; }
td strong { color: #f5d538; }
td .arr { display: inline-block; fill: #86bd35; margin-right: 3px; }
.gauge { width: 17px; height: 12px; }
.c1 { width: 49px; } .c2 { width: 78px; } .c3 { width: 76px; } .c4 { width: 64px; } .c5 { width: 63px; }
.c6 { width: 78px; } .c7 { width: 77px; } .c8 { width: 58px; } .c9 { width: 119px; } .c10 { width: 67px; }

/* taskbar */
.taskbar { height: 25px; flex: none; background: linear-gradient(90deg, #22262a, #2b2a26 25%, #2b2a28); display: flex; align-items: stretch; }
.start { width: 30px; }
.search { width: 215px; background: #f0f0f0; display: flex; align-items: center; gap: 6px; padding-left: 7px; }
.search input { flex: 1; }
.search input::placeholder { color: #333; opacity: 1; }
.apps { display: grid; grid-template-columns: repeat(9, 1fr); width: 276px; }
.apps svg { width: 14px; height: 14px; }
.apps .current { background: #4c4d4e; }
.apps .current, .apps .running { border-bottom: 2px solid #6cb0e8; }
.tray { margin-left: auto; display: flex; align-items: center; gap: 5px; padding-right: 15px; color: #eee; }
.tray time { font-size: 7px; line-height: 11px; text-align: center; margin: 0 6px 0 1px; }
```
